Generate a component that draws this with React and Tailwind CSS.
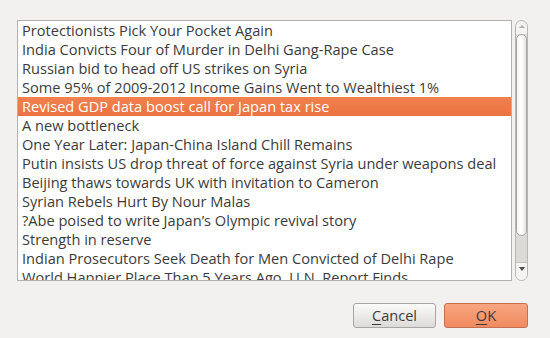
import React from 'react';

const items = [
  'Protectionists Pick Your Pocket Again',
  'India Convicts Four of Murder in Delhi Gang-Rape Case',
  'Russian bid to head off US strikes on Syria',
  'Some 95% of 2009-2012 Income Gains Went to Wealthiest 1%',
  'Revised GDP data boost call for Japan tax rise',
  'A new bottleneck',
  'One Year Later: Japan-China Island Chill Remains',
  'Putin insists US drop threat of force against Syria under weapons deal',
  'Beijing thaws towards UK with invitation to Cameron',
  'Syrian Rebels Hurt By Nour Malas',
  '?Abe poised to write Japan\u2019s Olympic revival story',
  'Strength in reserve',
  'Indian Prosecutors Seek Death for Men Convicted of Delhi Rape',
  'World Happier Place Than 5 Years Ago, U.N. Report Finds',
];

const selected = 4;

const App = () => {
  return (
    <div className="w-[550px] h-[338px] bg-[#f2f1f0] flex flex-col text-[#3c3c3c]" style={{fontFamily: '"Open Sans", "DejaVu Sans", sans-serif'}}>
      <div className="flex mt-[20px] ml-[17px] h-[261px]">
        <div className="w-[495px] h-full border border-[#b4b2ae] bg-white overflow-hidden">
          {items.map((item, key) => (
            <div key={key}
                 className={'h-[19px] pl-[4px] text-[14.6px] leading-[19px] whitespace-nowrap' + (key === selected ? ' bg-gradient-to-b from-[#f1814f] to-[#eb7240] text-white' : '')}>
              {item}
            </div>
          ))}
        </div>
        <div className="ml-[3px] w-[13px] h-full rounded-full border border-[#b8b6b2] bg-[#dcdad6] flex flex-col items-center overflow-hidden">
          <div className="w-full h-[13px] bg-[#f4f3f1] flex justify-center pt-[4px]">
            <div className="w-0 h-0 border-l-[3px] border-r-[3px] border-b-[3px] border-l-transparent border-r-transparent border-b-[#b0aeaa]"></div>
          </div>
          <div className="w-full h-[202px] rounded-full border border-[#a9a7a3] bg-gradient-to-r from-[#f6f5f4] via-[#ffffff] to-[#e4e2df]"></div>
          <div className="flex-1"></div>
          <div className="w-full h-[18px] bg-[#f4f3f1] border-t border-[#c4c2be] flex justify-center pt-[4px]">
            <div className="w-0 h-0 border-l-[3px] border-r-[3px] border-t-[4px] border-l-transparent border-r-transparent border-t-[#4c4c4c]"></div>
          </div>
        </div>
      </div>
      <div className="flex justify-end gap-[8px] mt-[22px] mr-[22px]">
        <button className="w-[83px] h-[25px] rounded-[3px] border border-[#a8a6a2] bg-gradient-to-b from-[#fbfbfa] to-[#dcdbd9] text-[14.6px] text-[#3c3c3c]">
          <span className="underline underline-offset-[3px]">C</span>ancel
        </button>
        <button className="w-[84px] h-[25px] rounded-[3px] border border-[#c67050] bg-gradient-to-b from-[#f7a681] to-[#f08a5f] text-[14.6px] text-[#3c3c3c]">
          <span className="underline underline-offset-[3px]">O</span>K
        </button>
      </div>
    </div>
  );
};

export default App;
